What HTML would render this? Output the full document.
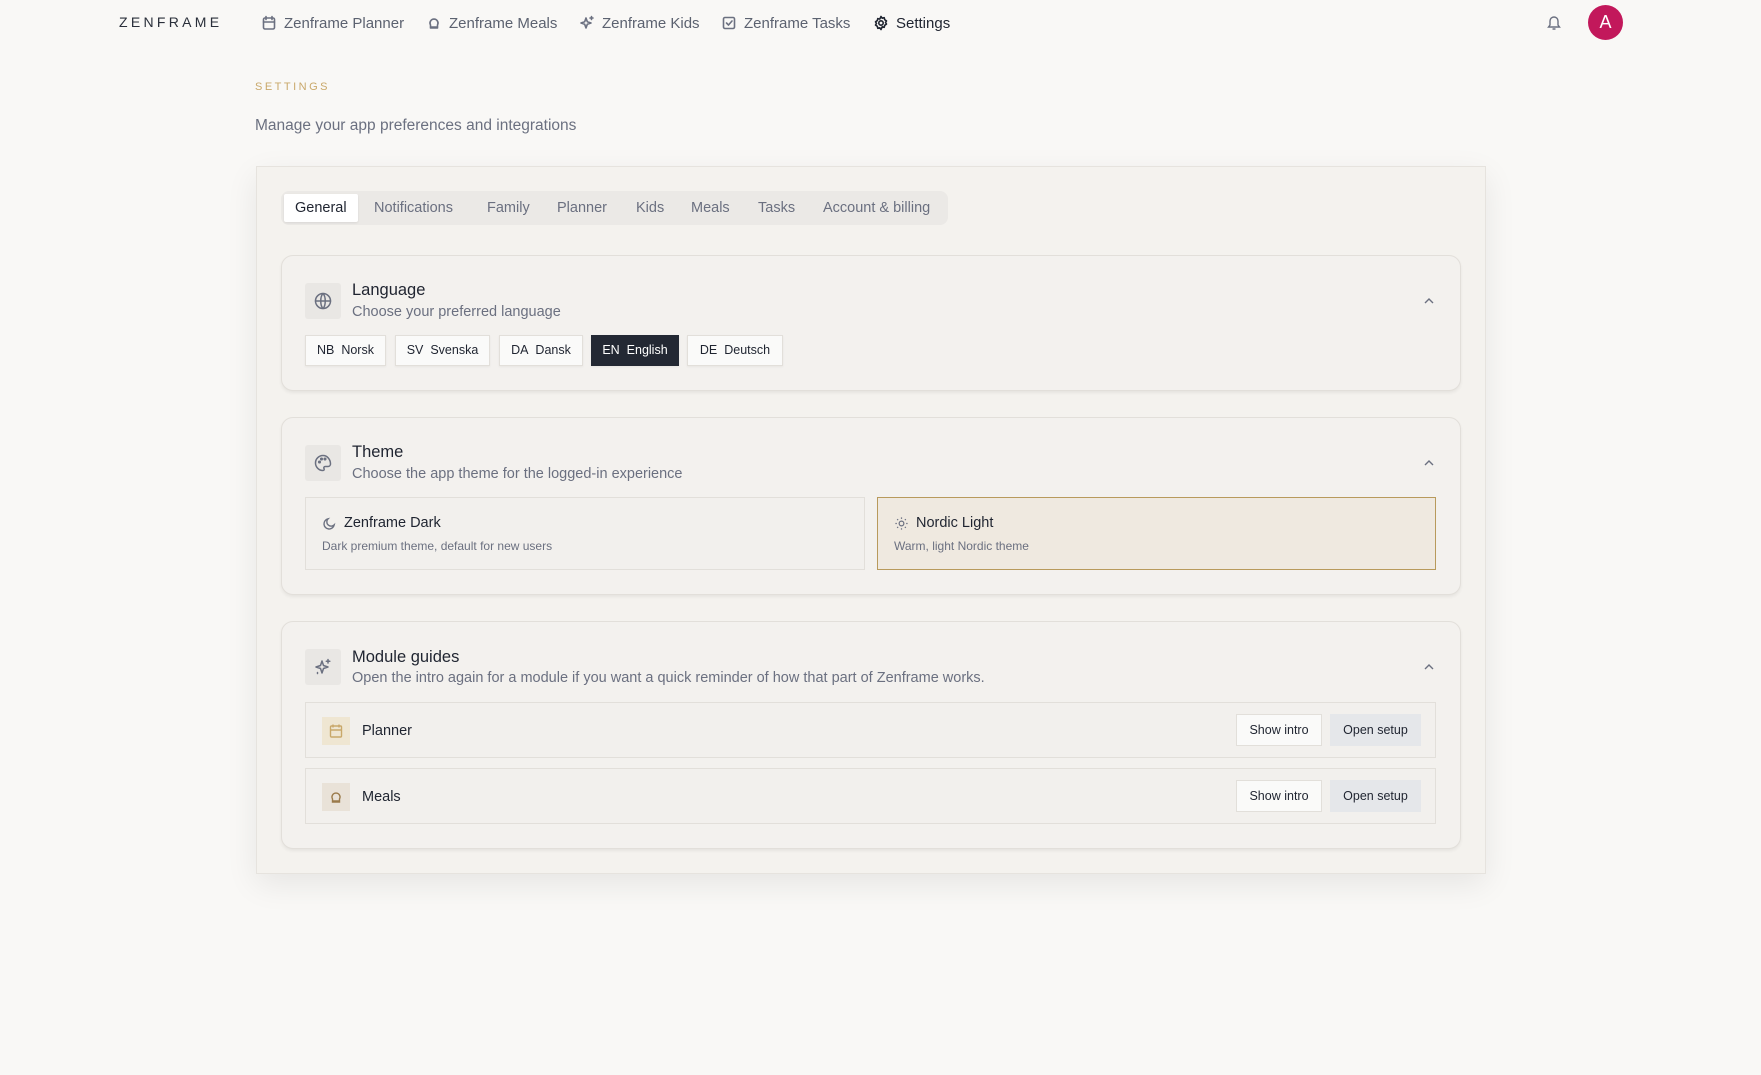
<!DOCTYPE html>
<html><head><meta charset="utf-8"><style>
*{box-sizing:border-box;margin:0;padding:0}
body{width:1761px;height:1075px;background:#f9f8f6;font-family:"Liberation Sans",sans-serif;color:#1f2430;position:relative;overflow:hidden}
.abs{position:absolute}
.nav{font-size:15px;color:#5c6270;display:flex;align-items:center;gap:7px;top:12px;height:22px}
.nav svg{width:16px;height:16px;stroke:#6b7080;fill:none;stroke-width:1.6;stroke-linecap:round;stroke-linejoin:round}
.panel{left:256px;top:166px;width:1230px;height:708px;background:#f4f2ee;border:1px solid #e6e3de;box-shadow:0 10px 30px rgba(0,0,0,.08)}
.tabs{left:281px;top:191px;width:667px;height:34px;background:#ebe9e6;border-radius:8px}
.tab{position:absolute;top:0;height:34px;line-height:34px;font-size:14.5px;color:#6b7080}
.card{left:281px;width:1180px;background:#f3f1ee;border:1px solid #e2dfda;border-radius:12px;box-shadow:0 2px 3px rgba(0,0,0,.06)}
.ib{width:36px;height:36px;background:#e9e7e4;border-radius:3px;display:flex;align-items:center;justify-content:center}
.ib svg{width:20px;height:20px;stroke:#6b7080;fill:none;stroke-width:1.5;stroke-linecap:round;stroke-linejoin:round}
.ttl{font-size:16.5px;color:#1f2430}
.sub{font-size:14.5px;color:#6b7080}
.chev{width:12px;height:8px}
.lb{position:absolute;top:335px;height:31px;background:#fafaf9;border:1px solid #e2dfda;font-size:12.5px;line-height:29px;text-align:center;color:#1f2430;box-shadow:0 1px 2px rgba(0,0,0,.05)}
.th{position:absolute;top:497px;height:73px;border:1px solid #e2dfda;background:#f2f0ed;padding:17px 16px}
.th .t{font-size:14.5px;color:#1f2430;display:flex;align-items:center;gap:7px}
.th .d{font-size:12px;color:#6b7080;margin-top:8px}
.row{position:absolute;left:305px;width:1131px;height:56px;background:#f2f0ed;border:1px solid #e2dfda}
.btn{position:absolute;top:11px;height:32px;line-height:30px;font-size:12.5px;text-align:center;border:1px solid #e2dfda}
</style></head><body>
<div class="abs" style="left:119px;top:14px;font-size:14px;letter-spacing:3.3px;color:#2a2f3a">ZENFRAME</div>
<div class="abs nav" style="left:261px"><svg viewBox="0 0 16 16"><rect x="2.5" y="3" width="11" height="11" rx="1.5"/><path d="M5 1.5v3M11 1.5v3M2.5 7h11"/></svg>Zenframe Planner</div>
<div class="abs nav" style="left:426px"><svg viewBox="0 0 16 16"><path d="M4.5 10a4 4 0 1 1 7 0v3h-7z M4.5 12h7"/></svg>Zenframe Meals</div>
<div class="abs nav" style="left:579px"><svg viewBox="0 0 16 16"><path d="M7 3l1.3 3.7L12 8l-3.7 1.3L7 13l-1.3-3.7L2 8l3.7-1.3zM12.5 1.5v3M11 3h3"/></svg>Zenframe Kids</div>
<div class="abs nav" style="left:721px"><svg viewBox="0 0 16 16"><rect x="2.5" y="2.5" width="11" height="11" rx="1.5"/><path d="M5.5 8l2 2 3.5-4"/></svg>Zenframe Tasks</div>
<div class="abs nav" style="left:873px;color:#1f2430"><svg viewBox="0 0 16 16" style="stroke:#1f2430"><circle cx="8" cy="8" r="2.2"/><path d="M8 1.5l1.2 1.7 2-.5.5 2 1.8 1.2-1 1.6 1 1.6-1.8 1.2-.5 2-2-.5L8 14.5l-1.2-1.7-2 .5-.5-2L2.5 10l1-1.6-1-1.6 1.8-1.2.5-2 2 .5z"/></svg>Settings</div>
<svg class="abs" style="left:1546px;top:14px" width="16" height="17" viewBox="0 0 16 17" fill="none" stroke="#6b7080" stroke-width="1.4"><path d="M4 11V7a4 4 0 0 1 8 0v4l1.5 2h-11z M6.5 15h3"/></svg>
<div class="abs" style="left:1588px;top:5px;width:35px;height:35px;border-radius:50%;background:#c2185b;color:#fff;font-size:18px;text-align:center;line-height:35px">A</div>
<div class="abs" style="left:255px;top:81px;font-size:11px;letter-spacing:2.5px;color:#c9a86a">SETTINGS</div>
<div class="abs" style="left:255px;top:117px;font-size:15.5px;color:#6b7080">Manage your app preferences and integrations</div>

<div class="abs panel"></div>
<div class="abs tabs">
<div class="tab" style="left:3px;top:3px;height:28px;line-height:28px;background:#fff;color:#1f2430;padding:0 11px;border-radius:2px;box-shadow:0 1px 2px rgba(0,0,0,.08)">General</div>
<div class="tab" style="left:93px">Notifications</div>
<div class="tab" style="left:206px">Family</div>
<div class="tab" style="left:276px">Planner</div>
<div class="tab" style="left:355px">Kids</div>
<div class="tab" style="left:410px">Meals</div>
<div class="tab" style="left:477px">Tasks</div>
<div class="tab" style="left:542px">Account &amp; billing</div>
</div>

<div class="abs card" style="top:255px;height:136px"></div>
<div class="abs ib" style="left:305px;top:283px"><svg viewBox="0 0 20 20"><circle cx="10" cy="10" r="7.5"/><path d="M2.5 10h15M10 2.5c3 3 3 12 0 15M10 2.5c-3 3-3 12 0 15"/></svg></div>
<div class="abs ttl" style="left:352px;top:281px">Language</div>
<div class="abs sub" style="left:352px;top:304px">Choose your preferred language</div>
<svg class="abs chev" style="left:1423px;top:297px" viewBox="0 0 12 8" fill="none" stroke="#6b7080" stroke-width="1.4"><path d="M2 6l4-4 4 4"/></svg>
<div class="lb" style="left:305px;width:81px">NB&nbsp;&nbsp;Norsk</div>
<div class="lb" style="left:395px;width:95px">SV&nbsp;&nbsp;Svenska</div>
<div class="lb" style="left:499px;width:84px">DA&nbsp;&nbsp;Dansk</div>
<div class="lb" style="left:591px;width:88px;background:#232833;color:#fff;border-color:#232833">EN&nbsp;&nbsp;English</div>
<div class="lb" style="left:687px;width:96px">DE&nbsp;&nbsp;Deutsch</div>

<div class="abs card" style="top:417px;height:178px"></div>
<div class="abs ib" style="left:305px;top:445px"><svg viewBox="0 0 20 20"><path d="M10 2.5a7.5 7.5 0 0 0 0 15c1.2 0 1.5-1 1-2s0-2 1.3-2H15a2.5 2.5 0 0 0 2.5-2.5c0-4.7-3.4-8.5-7.5-8.5z"/><circle cx="6.5" cy="9" r=".8"/><circle cx="8.5" cy="6" r=".8"/><circle cx="12" cy="6" r=".8"/></svg></div>
<div class="abs ttl" style="left:352px;top:443px">Theme</div>
<div class="abs sub" style="left:352px;top:466px">Choose the app theme for the logged-in experience</div>
<svg class="abs chev" style="left:1423px;top:459px" viewBox="0 0 12 8" fill="none" stroke="#6b7080" stroke-width="1.4"><path d="M2 6l4-4 4 4"/></svg>
<div class="th" style="left:305px;width:560px"><div class="t"><svg width="15" height="15" viewBox="0 0 16 16" fill="none" stroke="#6b7080" stroke-width="1.5"><path d="M13 9.5A5.5 5.5 0 1 1 6.5 3a4.5 4.5 0 0 0 6.5 6.5z"/></svg>Zenframe Dark</div><div class="d">Dark premium theme, default for new users</div></div>
<div class="th" style="left:877px;width:559px;background:#efe9e0;border-color:#b89a5c"><div class="t"><svg width="15" height="15" viewBox="0 0 16 16" fill="none" stroke="#6b7080" stroke-width="1.3"><circle cx="8" cy="8" r="2.5"/><path d="M8 1.5v1.5M8 13v1.5M1.5 8H3M13 8h1.5M3.4 3.4l1 1M11.6 11.6l1 1M3.4 12.6l1-1M11.6 4.4l1-1"/></svg>Nordic Light</div><div class="d">Warm, light Nordic theme</div></div>

<div class="abs card" style="top:621px;height:228px"></div>
<div class="abs ib" style="left:305px;top:649px"><svg viewBox="0 0 20 20"><path d="M9 4l1.5 4.5L15 10l-4.5 1.5L9 16l-1.5-4.5L3 10l4.5-1.5zM15 2.5v3.5M13.3 4.2h3.5M4.5 15.5v1"/></svg></div>
<div class="abs ttl" style="left:352px;top:648px">Module guides</div>
<div class="abs sub" style="left:352px;top:670px">Open the intro again for a module if you want a quick reminder of how that part of Zenframe works.</div>
<svg class="abs chev" style="left:1423px;top:663px" viewBox="0 0 12 8" fill="none" stroke="#6b7080" stroke-width="1.4"><path d="M2 6l4-4 4 4"/></svg>
<div class="row" style="top:702px">
<div class="abs" style="left:16px;top:14px;width:28px;height:28px;background:#efe6d2;display:flex;align-items:center;justify-content:center"><svg width="16" height="16" viewBox="0 0 16 16" fill="none" stroke="#c9a86a" stroke-width="1.4"><rect x="2.5" y="3" width="11" height="11" rx="1"/><path d="M5 1.5v3M11 1.5v3M2.5 7h11"/></svg></div>
<div class="abs" style="left:56px;top:20px;font-size:14.5px">Planner</div>
<div class="btn" style="left:930px;width:86px;background:#fafaf9">Show intro</div>
<div class="btn" style="left:1024px;width:91px;background:#e5e7ea;border-color:#e5e7ea">Open setup</div>
</div>
<div class="row" style="top:768px">
<div class="abs" style="left:16px;top:14px;width:28px;height:28px;background:#e9e2d8;display:flex;align-items:center;justify-content:center"><svg width="16" height="16" viewBox="0 0 16 16" fill="none" stroke="#9a7a4a" stroke-width="1.4"><path d="M4.5 10a4 4 0 1 1 7 0v3h-7zM4.5 12h7"/></svg></div>
<div class="abs" style="left:56px;top:20px;font-size:14.5px">Meals</div>
<div class="btn" style="left:930px;width:86px;background:#fafaf9">Show intro</div>
<div class="btn" style="left:1024px;width:91px;background:#e5e7ea;border-color:#e5e7ea">Open setup</div>
</div>
</body></html>
